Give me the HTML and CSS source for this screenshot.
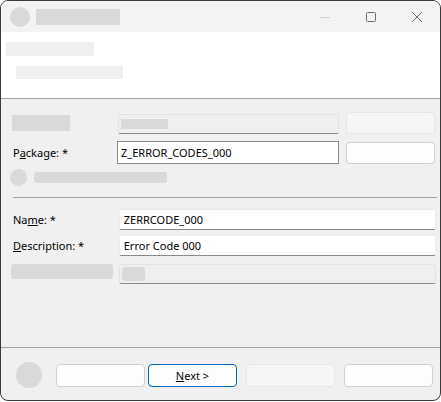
FILE: index.html
```html
<!DOCTYPE html>
<html>
<head>
<meta charset="utf-8">
<link rel="stylesheet" href="styles.css">
</head>
<body>
<div class="window">
  <div class="titlebar">
    <span class="app-icon"></span>
    <span class="ph title-ph"></span>
    <div class="caption">
      <span class="cap-btn"><svg width="12" height="12" viewBox="0 0 12 12"><path d="M1 6.5h10" stroke="#d0d0d0" stroke-width="1"/></svg></span>
      <span class="cap-btn"><svg width="12" height="12" viewBox="0 0 12 12"><rect x="1.5" y="1.5" width="9" height="9" rx="1" fill="none" stroke="#6e6e6e" stroke-width="1"/></svg></span>
      <span class="cap-btn"><svg width="12" height="12" viewBox="0 0 12 12"><path d="M1 1L11 11M11 1L1 11" stroke="#6e6e6e" stroke-width="1"/></svg></span>
    </div>
  </div>
  <div class="header">
    <span class="ph head-ph1"></span>
    <span class="ph head-ph2"></span>
  </div>
  <div class="content">
    <div class="grid">
      <span class="ph label-ph1"></span>
      <div class="field disabled"><span class="ph inner-ph"></span></div>
      <span class="btn side disabled-btn"></span>

      <label class="lbl">P<u>a</u>ckage: *</label>
      <div class="field classic">Z_ERROR_CODES_000</div>
      <span class="btn side"></span>
    </div>
    <div class="hint-row">
      <span class="hint-dot"></span>
      <span class="ph hint-ph"></span>
    </div>
    <div class="divider"></div>
    <div class="form-row first">
      <label class="lbl">Na<u>m</u>e: *</label>
      <div class="field modern">ZERRCODE_000</div>
    </div>
    <div class="form-row">
      <label class="lbl"><u>D</u>escription: *</label>
      <div class="field modern">Error Code 000</div>
    </div>
    <div class="form-row last">
      <span class="ph label-ph2"></span>
      <div class="field disabled wide"><span class="ph inner-ph2"></span></div>
    </div>
  </div>
  <div class="footer">
    <span class="foot-dot"></span>
    <div class="buttons">
      <span class="btn"></span>
      <span class="btn primary"><u>N</u>ext &gt;</span>
      <span class="btn disabled-btn gap"></span>
      <span class="btn gap"></span>
    </div>
  </div>
</div>
</body>
</html>
```

FILE: styles.css
```css
* { box-sizing: border-box; }
html, body { margin: 0; padding: 0; background: #ffffff; }
body {
  font-family: "Noto Sans", "Open Sans", sans-serif;
  font-size: 11px;
  color: #000;
}
.window {
  width: 441px;
  height: 401px;
  border: 1px solid #3a3a3a;
  border-radius: 8px;
  overflow: hidden;
  background: #f0f0f0;
  display: flex;
  flex-direction: column;
}
.ph { display: block; background: #d9d9d9; }
.titlebar {
  height: 31px;
  background: #f3f3f3;
  display: flex;
  align-items: center;
  flex: none;
}
.app-icon {
  width: 20px; height: 20px; border-radius: 50%;
  background: #d9d9d9;
  margin-left: 9px;
}
.title-ph { width: 84px; height: 16px; margin-left: 6px; }
.caption { margin-left: auto; display: flex; height: 100%; }
.cap-btn {
  width: 46px; height: 100%;
  display: flex; align-items: center; justify-content: center;
}
.cap-btn svg { display: block; }
.header {
  height: 67px;
  background: #fff;
  border-bottom: 1px solid #a0a0a0;
  flex: none;
  padding-top: 10px;
}
.head-ph1 { width: 88px; height: 14px; margin-left: 5px; background: #efefef; }
.head-ph2 { width: 107px; height: 13px; margin-left: 15px; margin-top: 10px; background: #efefef; }

.content {
  flex: 1;
  border-bottom: 1px solid #a0a0a0;
  padding: 13px 4px 0 10px;
}
.grid {
  display: grid;
  grid-template-columns: 100px 221px 89px;
  column-gap: 7px;
  row-gap: 7px;
  align-items: center;
}
.grid > * { height: 22px; }
.label-ph1 { width: 58px; height: 16px !important; margin-left: 1px; }
.lbl { display: flex; align-items: center; padding-left: 2px; white-space: nowrap; }
.field {
  display: flex; align-items: center;
  padding-left: 4px;
  white-space: nowrap;
}
.field.disabled {
  background: #efefef;
  border: 1px solid #e3e3e3;
  border-bottom-color: #8a8a8a;
  border-radius: 2px;
  padding-left: 2px;
  height: 20px;
  margin-top: 1px;
}
.inner-ph { width: 47px; height: 10px; }
.field.classic {
  background: #fff;
  border: 1px solid #8a8a8a;
  height: 23px;
  margin-left: -1px;
  padding-left: 3px;
}
.btn {
  display: flex; align-items: center; justify-content: center;
  width: 89px; height: 23px;
  background: #fdfdfd;
  border: 1px solid #d0d0d0;
  border-radius: 4px;
}
.btn.side { height: 22px; }
.btn.disabled-btn { background: #f6f6f6; border-color: #e6e6e6; }
.hint-row { display: flex; align-items: center; margin-top: 5px; height: 17px; }
.hint-dot { width: 17px; height: 17px; border-radius: 50%; background: #d9d9d9; margin-left: -1px; }
.hint-ph { width: 133px; height: 11px; margin-left: 7px; border-radius: 3px; }
.divider { height: 1px; background: #a0a0a0; margin: 11px 0 0 2px; width: 424px; }

.form-row {
  display: flex;
  align-items: center;
  height: 21px;
  margin-top: 5px;
}
.form-row.first { margin-top: 11px; }
.form-row.last { margin-top: 8px; height: 20px; align-items: flex-start; }
.form-row .lbl { width: 108px; height: 100%; }
.field.modern {
  width: 318px;
  background: #fff;
  border: 1px solid #ececec;
  border-bottom-color: #8a8a8a;
  border-radius: 2px;
  padding-left: 4px;
  height: 21px;
}
.label-ph2 { width: 102px; height: 15px; border-radius: 3px; margin-left: 0; margin-right: 6px; }
.field.disabled.wide { width: 318px; height: 20px; margin-top: 0; }
.inner-ph2 { width: 23px; height: 14px; border-radius: 3px; }

.footer {
  height: 52px;
  flex: none;
  display: flex;
  align-items: center;
  padding-left: 15px;
}
.foot-dot { width: 26px; height: 26px; border-radius: 50%; background: #d9d9d9; margin-top: 1px; }
.buttons { display: flex; gap: 3px; margin-left: 14px; margin-top: 2px; }
.buttons .btn.gap { margin-left: 6px; }
.btn.primary {
  border: 1.5px solid #0067c0;
  background: #fdfdfd;
}
```
